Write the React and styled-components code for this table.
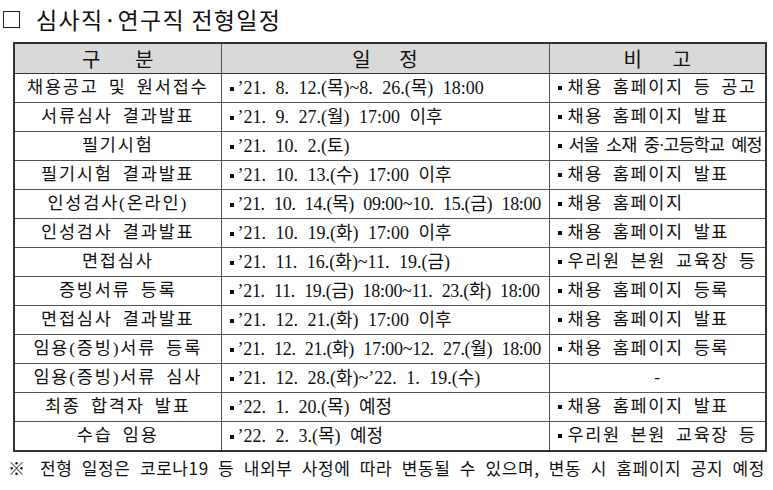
import React from 'react';
import styled, { createGlobalStyle } from 'styled-components';

const GlobalStyle = createGlobalStyle`
  html, body {
    margin: 0;
    padding: 0;
    background: #fff;
  }
`;

const rows = [
  ['채용공고 및 원서접수', '’21. 8. 12.(목)~8. 26.(목) 18:00', '채용 홈페이지 등 공고'],
  ['서류심사 결과발표', '’21. 9. 27.(월) 17:00 이후', '채용 홈페이지 발표'],
  ['필기시험', '’21. 10. 2.(토)', '서울 소재 중·고등학교 예정'],
  ['필기시험 결과발표', '’21. 10. 13.(수) 17:00 이후', '채용 홈페이지 발표'],
  ['인성검사(온라인)', '’21. 10. 14.(목) 09:00~10. 15.(금) 18:00', '채용 홈페이지'],
  ['인성검사 결과발표', '’21. 10. 19.(화) 17:00 이후', '채용 홈페이지 발표'],
  ['면접심사', '’21. 11. 16.(화)~11. 19.(금)', '우리원 본원 교육장 등'],
  ['증빙서류 등록', '’21. 11. 19.(금) 18:00~11. 23.(화) 18:00', '채용 홈페이지 등록'],
  ['면접심사 결과발표', '’21. 12. 21.(화) 17:00 이후', '채용 홈페이지 발표'],
  ['임용(증빙)서류 등록', '’21. 12. 21.(화) 17:00~12. 27.(월) 18:00', '채용 홈페이지 등록'],
  ['임용(증빙)서류 심사', '’21. 12. 28.(화)~’22. 1. 19.(수)', null],
  ['최종 합격자 발표', '’22. 1. 20.(목) 예정', '채용 홈페이지 발표'],
  ['수습 임용', '’22. 2. 3.(목) 예정', '우리원 본원 교육장 등'],
];

const Page = styled.div`
  width: 773px;
  height: 490px;
  padding: 4px 8px 0 3px;
  box-sizing: border-box;
  font-family: 'Noto Sans CJK KR', sans-serif;
  color: #111;
`;

const Title = styled.h2`
  margin: 0 0 8px 0;
  display: flex;
  align-items: center;
  gap: 16px;
  font-size: 23px;
  font-weight: 400;
  line-height: 30px;
  letter-spacing: 1.3px;
`;

const Box = styled.span`
  width: 15px;
  height: 15px;
  border: 1px solid #222;
`;

const Table = styled.table`
  margin-left: 10px;
  width: 752px;
  border-collapse: collapse;
  border: 2px solid #333;
  table-layout: fixed;
`;

const Th = styled.th`
  height: 29px;
  padding: 0;
  background: #d9d9d9;
  border: 1px solid #555;
  border-bottom: 1.5px solid #333;
  font-size: 20px;
  font-weight: 400;
  word-spacing: ${p => p.$spread}px;
  line-height: 1;
`;

const Td = styled.td`
  height: 28px;
  padding: 0 0 0 ${p => (p.$center ? 0 : 8)}px;
  border: 1px solid #555;
  text-align: ${p => (p.$center ? 'center' : 'left')};
  font-family: 'Liberation Serif', 'Noto Sans CJK KR', serif;
  font-size: ${p => (p.$date ? 18 : 17.5)}px;
  line-height: 1;
  white-space: nowrap;
  overflow: hidden;
  letter-spacing: ${p => p.$spacing}px;
  word-spacing: ${p => (p.$date ? 5 : 4)}px;
`;

const Bullet = styled.span`
  display: inline-block;
  width: 4px;
  height: 4px;
  background: #111;
  margin-right: ${p => (p.$gap ? p.$gap : 6)}px;
  vertical-align: 3px;
`;

const Note = styled.p`
  margin: 5px 0 0 5px;
  width: 757px;
  font-size: 17px;
  line-height: 22px;
  letter-spacing: 0.6px;
  text-align: justify;
  text-align-last: justify;
  white-space: nowrap;
`;

export default function App() {
  return (
    <>
      <GlobalStyle />
      <Page>
        <Title>
          <Box />
          심사직·연구직 전형일정
        </Title>
        <Table>
          <colgroup>
            <col style={{ width: 207 }} />
            <col style={{ width: 328 }} />
            <col style={{ width: 217 }} />
          </colgroup>
          <thead>
            <tr>
              <Th $spread={30}>구 분</Th>
              <Th $spread={24}>일 정</Th>
              <Th $spread={26}>비 고</Th>
            </tr>
          </thead>
          <tbody>
            {rows.map(([name, date, note]) => (
              <tr key={name}>
                <Td $center $spacing={1.8}>{name}</Td>
                <Td $date $spacing={date.length > 30 ? -0.3 : 0}>
                  <Bullet $gap={4} />
                  {date}
                </Td>
                {note ? (
                  <Td $spacing={note.length > 14 ? -1 : 1.6}>
                    <Bullet $gap={note.length > 14 ? 7 : 6} />
                    {note}
                  </Td>
                ) : (
                  <Td $center $spacing={0}>-</Td>
                )}
              </tr>
            ))}
          </tbody>
        </Table>
        <Note>※ 전형 일정은 코로나19 등 내외부 사정에 따라 변동될 수 있으며, 변동 시 홈페이지 공지 예정</Note>
      </Page>
    </>
  );
}
